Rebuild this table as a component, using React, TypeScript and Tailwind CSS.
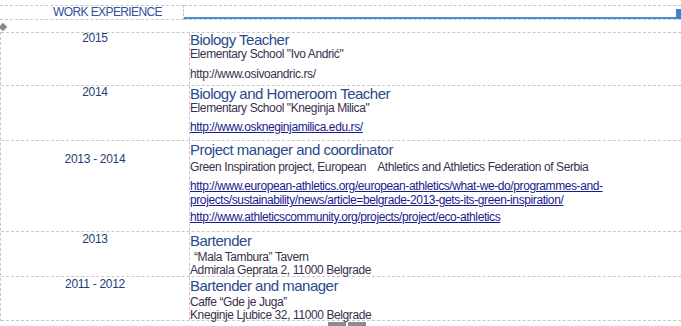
import React from 'react';

type Job = {
  years: string;
  title: string;
  lines: React.ReactNode[];
  h: string;
  shift: string;
  yearPad: string;
};

const link = 'text-[#1a1a8c] underline decoration-[#1a1a8c] underline-offset-[1px]';

const JOBS: Job[] = [
  {
    years: '2015',
    title: 'Biology Teacher',
    h: 'h-[53px]',
    shift: '-mt-[2px]',
    yearPad: '',
    lines: [
      <div key="a">Elementary School "Ivo Andrić"</div>,
      <div key="b" className="mt-[7px]">http://www.osivoandric.rs/</div>,
    ],
  },
  {
    years: '2014',
    title: 'Biology and Homeroom Teacher',
    h: 'h-[55px]',
    shift: '-mt-[1px]',
    yearPad: '',
    lines: [
      <div key="a">Elementary School "Kneginja Milica"</div>,
      <div key="b" className={`mt-[6px] ${link}`}>http://www.oskneginjamilica.edu.rs/</div>,
    ],
  },
  {
    years: '2013 - 2014',
    title: 'Project manager and coordinator',
    h: 'h-[91px]',
    shift: '',
    yearPad: 'pt-[11px]',
    lines: [
      <div key="a" className="mt-[3px]">Green Inspiration project, European&nbsp;&nbsp;&nbsp; Athletics and Athletics Federation of Serbia</div>,
      <div key="b" className={`mt-[5px] leading-[14px] ${link}`}>
        http://www.european-athletics.org/european-athletics/what-we-do/programmes-and-
        <br />
        projects/sustainability/news/article=belgrade-2013-gets-its-green-inspiration/
      </div>,
      <div key="c" className={`mt-[3px] leading-[14px] ${link}`}>http://www.athleticscommunity.org/projects/project/eco-athletics</div>,
    ],
  },
  {
    years: '2013',
    title: 'Bartender',
    h: 'h-[45px]',
    shift: '',
    yearPad: '',
    lines: [
      <div key="a" className="mt-[2px] pl-[4px]">“Mala Tambura” Tavern</div>,
      <div key="b">Admirala Geprata 2, 11000 Belgrade</div>,
    ],
  },
  {
    years: '2011 - 2012',
    title: 'Bartender and manager',
    h: 'h-[44px]',
    shift: '',
    yearPad: '',
    lines: [
      <div key="a" className="mt-[2px]">Caffe “Gde je Juga”</div>,
      <div key="b">Kneginje Ljubice 32, 11000 Belgrade</div>,
    ],
  },
];

export default function App() {
  return (
    <div className="relative w-[681px] h-[326px] overflow-hidden bg-white font-['Liberation_Sans',Arial,sans-serif]">
      {/* header strip */}
      <div className="flex mt-[5px] h-[15px]">
        <div className="w-[184px] border-t border-b border-r border-dashed border-[#c8c8c8] text-[12px] leading-[13px] tracking-[-0.6px] text-[#2f4f9f] pl-[53px]">
          WORK EXPERIENCE
        </div>
        <div className="flex-1 relative border-t border-b border-dashed border-[#c8c8c8]">
          <div className="absolute left-0 right-0 bottom-[0px] h-[2px] bg-[#4a90d0]" />
          <div className="absolute right-0 bottom-0 w-[5px] h-[10px] bg-[#3b87cc]" />
        </div>
      </div>

      {/* small anchor marker */}
      <div className="h-[12px] relative">
        <div className="absolute left-[0px] top-[4px] w-[6px] h-[6px] rotate-45 bg-[#8a8a8a]" />
      </div>

      {/* table */}
      <div className="border-l border-dashed border-[#c8c8c8]">
        {JOBS.map((j) => (
          <div key={j.title} className={`flex border-t border-dashed border-[#c8c8c8] ${j.h}`}>
            <div className={`w-[189px] shrink-0 border-r border-dashed border-[#c8c8c8] text-center text-[12px] leading-[14px] tracking-[-0.3px] text-[#24407a] ${j.yearPad}`}>
              <div className={j.shift}>{j.years}</div>
            </div>
            <div className={`text-[12px] leading-[13px] tracking-[-0.4px] text-[#3a2f4d] ${j.shift}`}>
              <div className="text-[15px] leading-[17px] tracking-[-0.5px] text-[#2a4a8c]">{j.title}</div>
              {j.lines}
            </div>
          </div>
        ))}
        <div className="border-t border-dashed border-[#c8c8c8]" />
      </div>

      {/* bottom handle */}
      <div className="absolute left-[328px] top-[322px] w-[18px] h-[4px] bg-[#8c8c8c]" />
      <div className="absolute left-[348px] top-[322px] w-[18px] h-[4px] bg-[#8c8c8c]" />
    </div>
  );
}
